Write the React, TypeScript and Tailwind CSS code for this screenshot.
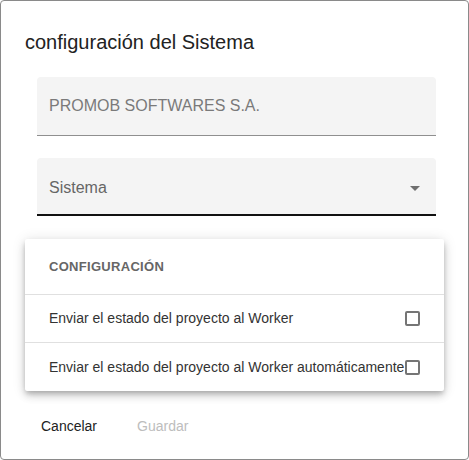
import React from "react";

function Checkbox() {
  return <div className="w-[15px] h-[15px] border-2 border-[#757575] rounded-[2px] shrink-0" />;
}

export default function App() {
  return (
    <div
      className="w-[469px] h-[460px] bg-white border border-[#8a8a8a] rounded-[4px] flex flex-col text-[#222]"
      style={{ fontFamily: '"Liberation Sans", Arial, sans-serif' }}
    >
      <div className="pt-[25px] px-6 text-[20px] leading-[32px] text-[#222]">configuración del Sistema</div>

      <div className="mt-[19px] ml-[36px] mr-[32px] h-[59px] bg-[#f4f4f4] rounded-t-[4px] border-b border-[#8f8f8f] flex items-center px-3">
        <span className="text-[16px] text-[#7a7a7a]">PROMOB SOFTWARES S.A.</span>
      </div>

      <div className="mt-[22px] ml-[36px] mr-[32px] h-[58px] bg-[#f4f4f4] rounded-t-[4px] border-b-2 border-[#111] flex items-center justify-between pl-3 pr-[9px] pt-[3px]">
        <span className="text-[16px] text-[#666]">Sistema</span>
        <svg width="24" height="24" viewBox="0 0 24 24" className="fill-[#6f6f6f]">
          <path d="M7 10l5 5 5-5z" />
        </svg>
      </div>

      <div className="mt-[23px] mx-[24px] bg-white shadow-[0_3px_5px_-1px_rgba(0,0,0,0.2),0_5px_8px_0_rgba(0,0,0,0.14),0_1px_14px_0_rgba(0,0,0,0.12)] rounded-[2px]">
        <div className="h-[56px] flex items-center px-6 pt-[1px] text-[13px] font-bold text-[#666] tracking-[0.3px] border-b border-[#e0e0e0]">
          CONFIGURACIÓN
        </div>
        <div className="h-[48px] flex items-center justify-between px-6 text-[14px] text-[#333] border-b border-[#e0e0e0]">
          <span>Enviar el estado del proyecto al Worker</span>
          <Checkbox />
        </div>
        <div className="h-[48px] flex items-center justify-between px-6 text-[14px] text-[#333]">
          <span>Enviar el estado del proyecto al Worker automáticamente</span>
          <Checkbox />
        </div>
      </div>

      <div className="mt-[17px] h-[36px] flex items-center pl-[40px] gap-[40px] text-[14px]">
        <span className="text-[#222]">Cancelar</span>
        <span className="text-[#bdbdbd]">Guardar</span>
      </div>
    </div>
  );
}
